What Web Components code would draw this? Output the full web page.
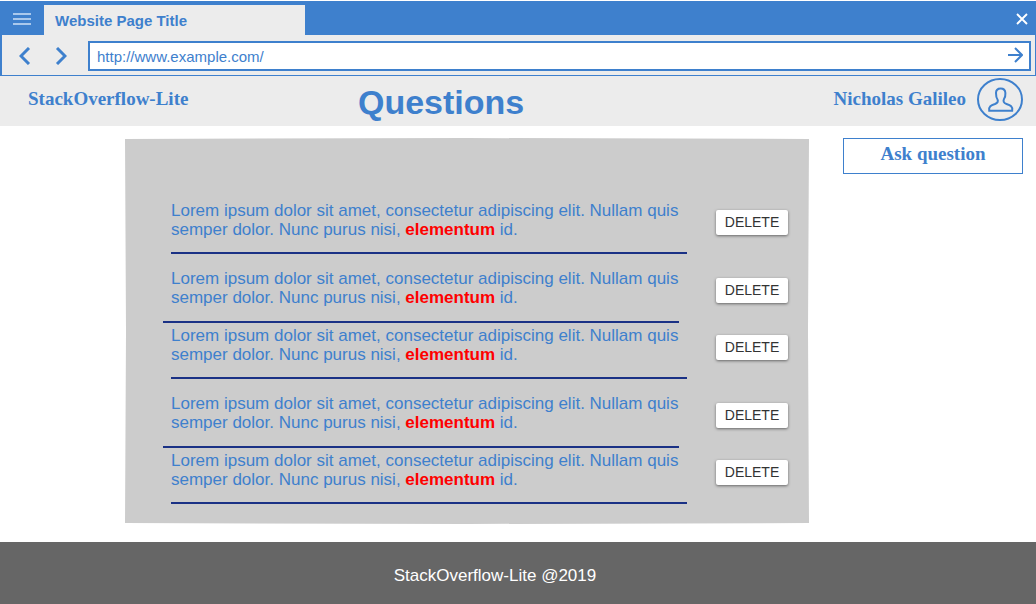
<!DOCTYPE html>
<html lang="en">
<head>
<meta charset="utf-8">
<title>StackOverflow-Lite</title>
<style>
html { height: 100%; }
body { margin: 0; min-height: 100%; display: flex; flex-direction: column; background: #fff;
  --blue: #3e80cd; --bar: #ececec; --display: "Liberation Serif", serif;
  font-family: "Liberation Sans", sans-serif; color: var(--blue); }
main { flex: 1; display: grid; grid-template-columns: minmax(0, 1fr) 180px; align-items: start; gap: 34px; padding: 12px 13px 18px 125px; }
</style>
</head>
<body>
<browser-bar page-title="Website Page Title" url="http://www.example.com/"></browser-bar>
<site-header brand="StackOverflow-Lite" user="Nicholas Galileo">Questions</site-header>
<main>
  <question-list>
    <question-item>Lorem ipsum dolor sit amet, consectetur adipiscing elit. Nullam quis semper dolor. Nunc purus nisi, <strong>elementum</strong> id.</question-item>
    <question-item outdent>Lorem ipsum dolor sit amet, consectetur adipiscing elit. Nullam quis semper dolor. Nunc purus nisi, <strong>elementum</strong> id.</question-item>
    <question-item>Lorem ipsum dolor sit amet, consectetur adipiscing elit. Nullam quis semper dolor. Nunc purus nisi, <strong>elementum</strong> id.</question-item>
    <question-item outdent>Lorem ipsum dolor sit amet, consectetur adipiscing elit. Nullam quis semper dolor. Nunc purus nisi, <strong>elementum</strong> id.</question-item>
    <question-item>Lorem ipsum dolor sit amet, consectetur adipiscing elit. Nullam quis semper dolor. Nunc purus nisi, <strong>elementum</strong> id.</question-item>
  </question-list>
  <ask-button>Ask question</ask-button>
</main>
<site-footer>StackOverflow-Lite @2019</site-footer>

<script>
const define = (name, markup, setup) => customElements.define(name, class extends HTMLElement {
  constructor() {
    super();
    this.attachShadow({ mode: 'open' }).innerHTML = markup;
    if (setup) setup(this, this.shadowRoot);
  }
});

define('browser-bar', `
<style>
  :host { display: block; padding-top: 1px; }
  button { border: 0; padding: 0; background: none; color: inherit; display: flex; align-items: center; justify-content: center; }
  svg { display: block; fill: none; stroke: currentColor; }
  .tabs { display: flex; height: 34px; background: var(--blue); }
  .menu { width: 44px; padding-top: 2px; color: #a9c8ec; }
  .tab { box-sizing: border-box; width: 261px; margin-top: 4px; padding-left: 11px; background: var(--bar); font: bold 15px/31px "Liberation Sans", sans-serif; }
  .close { margin-left: auto; width: 28px; padding-top: 2px; color: #fff; }
  .tools { display: flex; align-items: center; height: 40px; background: var(--bar); border: solid var(--blue); border-width: 0 1px 1px 2px; }
  .nav { width: 36px; height: 30px; padding-top: 2px; }
  .back { margin-left: 5px; }
  form { flex: 1; display: flex; box-sizing: border-box; height: 30px; margin: 2px 4px 0 9px; border: 2px solid var(--blue); background: #fff; }
  input { flex: 1; min-width: 0; border: 0; outline: 0; padding: 0 7px; background: none; color: var(--blue); font: 15px "Liberation Sans", sans-serif; }
  .go { width: 28px; padding-bottom: 2px; }
</style>
<div class="tabs">
  <button class="menu" aria-label="Menu"><svg width="18" height="12" stroke-width="2" viewBox="0 0 18 12"><path d="M0 1h18M0 6h18M0 11h18"/></svg></button>
  <div class="tab"></div>
  <button class="close" aria-label="Close"><svg width="12" height="12" viewBox="0 0 12 12" stroke-width="1.9"><path d="M1 1l10 10M11 1L1 11"/></svg></button>
</div>
<div class="tools">
  <button class="nav back" aria-label="Back"><svg width="12" height="18" viewBox="0 0 12 18" stroke-width="3"><path d="M10 1L2 9l8 8"/></svg></button>
  <button class="nav" aria-label="Forward"><svg width="12" height="18" viewBox="0 0 12 18" stroke-width="3"><path d="M2 1l8 8-8 8"/></svg></button>
  <form><input type="text" aria-label="Address"><button type="button" class="go" aria-label="Go"><svg width="16" height="16" viewBox="0 0 16 16" stroke-width="2"><path d="M1 8h13M8 1l7 7-7 7"/></svg></button></form>
</div>`, (el, root) => {
  root.querySelector('.tab').textContent = el.getAttribute('page-title');
  root.querySelector('input').value = el.getAttribute('url');
});

define('site-header', `
<style>
  :host { display: flex; align-items: center; height: 50px; padding: 0 13px 0 28px; background: var(--bar); }
  a { color: inherit; text-decoration: none; font: bold 19px/24px var(--display); padding-bottom: 4px; }
  .brand { width: 330px; }
  h1 { margin: 0; font-size: 34px; line-height: 40px; padding-top: 2px; }
  .user { display: flex; align-items: center; gap: 11px; margin-left: auto; }
  svg { display: block; fill: none; stroke: currentColor; }
</style>
<a class="brand" href="#"></a>
<h1><slot></slot></h1>
<a class="user" href="#"><span></span>
<svg width="46" height="43" viewBox="0 0 46 43" stroke-width="2"><ellipse cx="23" cy="21.500" rx="22" ry="20.500"/><path d="M12.200 32.800H35.200C36 28.500 33.500 27.300 29.500 26C26.500 25 26 23 27 21C28.500 19 28.500 17 28.400 15C28.200 12 26.500 10.500 23.700 10.500C20.500 10.500 19 12.500 19 15C19 17.500 19 19.500 20.500 21.500C21.500 23.500 20.500 25 18 26C14 27.300 11.500 28.500 12.200 32.800Z"/></svg></a>`, (el, root) => {
  root.querySelector('.brand').textContent = el.getAttribute('brand');
  root.querySelector('.user span').textContent = el.getAttribute('user');
});

define('question-list', `
<style>
  :host { display: block; padding: 63px 21px 20px 46px; background: #ccc;
    clip-path: polygon(0 1px, 50% 0, 100% 1px, calc(100% - 1px) 50%, 100% calc(100% - 1px), 50% 100%, 0 calc(100% - 1px), 1px 50%); }
</style><slot></slot>`);

define('question-item', `
<style>
  :host { display: grid; grid-template-columns: minmax(0, 1fr) 72px; column-gap: 29px; align-items: start; }
  :host([outdent]) { margin: 15px 0 3px; }
  p { margin: 0; font-size: 17px; line-height: 19px; }
  ::slotted(strong) { color: #f00; line-height: 1; }
  hr { margin: 13px 0 0; border: 0; height: 2px; background: #1a3185; }
  :host([outdent]) hr { margin: 14px 8px 0 -8px; }
  button { height: 25px; margin-top: 9px; padding: 0 0 2px; border: 0; border-radius: 2px; background: #fff; color: #333; font: 14px "Liberation Sans", sans-serif; box-shadow: 0 1px 3px rgba(0, 0, 0, .5); }
</style>
<div><p><slot></slot></p><hr></div>
<button type="button">DELETE</button>`);

define('ask-button', `
<style>
  :host { display: block; }
  button { display: block; box-sizing: border-box; width: 100%; height: 36px; padding: 0 0 4px; border: 1px solid var(--blue); background: #fff; color: var(--blue); font: bold 19px/24px var(--display); }
</style><button type="button"><slot></slot></button>`);

define('site-footer', `
<style>
  :host { display: block; padding: 23px 46px 17px 0; background: #666; color: #fff; text-align: center; font-size: 17px; line-height: 22px; }
</style><slot></slot>`);
</script>
</body>
</html>
